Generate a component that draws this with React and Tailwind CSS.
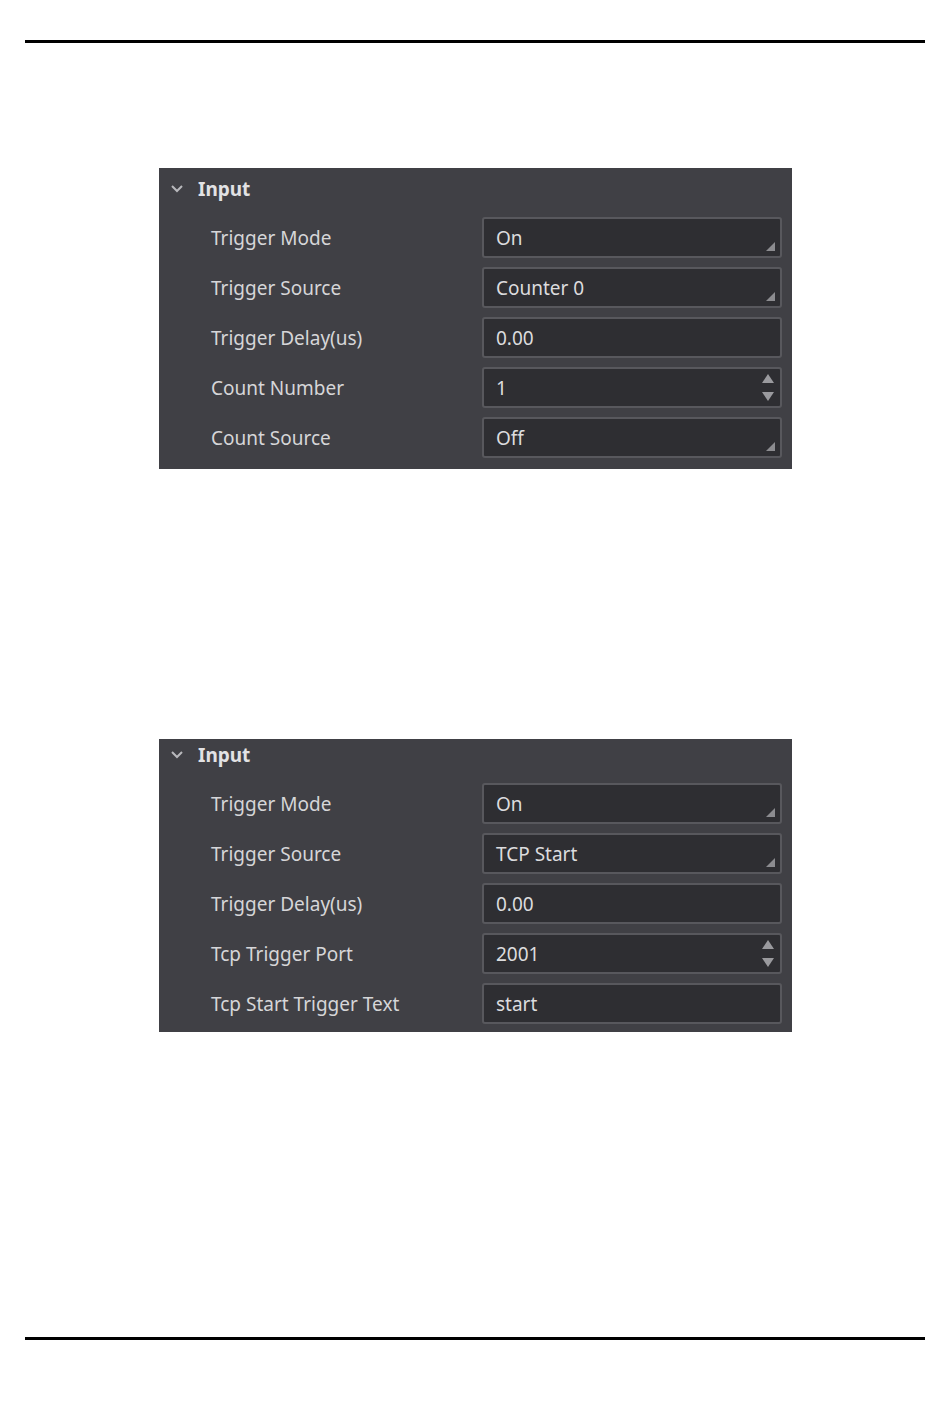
import React from "react";

const FONT = { fontFamily: '"Noto Sans", "Open Sans", sans-serif' };

function Corner() {
  return (
    <svg className="absolute right-[5px] bottom-[5px]" width="9" height="9" viewBox="0 0 9 9">
      <polygon points="9,0 9,9 0,9" fill="#8c8c90" />
    </svg>
  );
}

function Spinner() {
  return (
    <div className="absolute right-[6px] top-0 bottom-0 flex flex-col justify-between py-[5px]">
      <svg width="12" height="9" viewBox="0 0 12 9">
        <polygon points="6,0 12,9 0,9" fill="#9a9a9e" />
      </svg>
      <svg width="12" height="9" viewBox="0 0 12 9">
        <polygon points="0,0 12,0 6,9" fill="#9a9a9e" />
      </svg>
    </div>
  );
}

function Row({ label, value, kind }) {
  return (
    <div className="flex items-center h-[41px]">
      <div className="w-[323px] pl-[52px] text-[19px] text-[#d6d6d8] pt-[1px]">{label}</div>
      <div className="relative w-[300px] h-[41px] rounded-[3px] border-2 border-[#58585d] bg-[#2e2e32] flex items-center pl-[12px] pt-[1px] text-[19px] text-[#dcdcde]">
        {value}
        {kind === "select" && <Corner />}
        {kind === "spin" && <Spinner />}
      </div>
    </div>
  );
}

function Panel({ rows, pt, pb }) {
  return (
    <div className={`w-[633px] bg-[#404045] ${pt} ${pb}`} style={FONT}>
      <div className="h-[32px] flex items-center">
        <svg className="ml-[11px]" width="14" height="10" viewBox="0 0 14 10">
          <polyline points="2,2 7,7 12,2" fill="none" stroke="#b8b8bc" strokeWidth="2" />
        </svg>
        <span className="ml-[14px] text-[19px] font-bold text-[#e2e2e4]">Input</span>
      </div>
      <div className="pt-[12px] flex flex-col gap-[9px]">
        {rows.map((r) => (
          <Row key={r[0]} label={r[0]} value={r[1]} kind={r[2]} />
        ))}
      </div>
    </div>
  );
}

export default function App() {
  const rows1 = [
    ["Trigger Mode", "On", "select"],
    ["Trigger Source", "Counter 0", "select"],
    ["Trigger Delay(us)", "0.00", "text"],
    ["Count Number", "1", "spin"],
    ["Count Source", "Off", "select"],
  ];
  const rows2 = [
    ["Trigger Mode", "On", "select"],
    ["Trigger Source", "TCP Start", "select"],
    ["Trigger Delay(us)", "0.00", "text"],
    ["Tcp Trigger Port", "2001", "spin"],
    ["Tcp Start Trigger Text", "start", "text"],
  ];
  return (
    <div className="w-[950px] h-[1408px] bg-white flex flex-col">
      <div className="mt-[40px] mx-[25px] h-[3px] bg-black" />
      <div className="mt-[125px] ml-[159px]">
        <Panel rows={rows1} pt="pt-[5px]" pb="pb-[11px]" />
      </div>
      <div className="mt-[270px] ml-[159px]">
        <Panel rows={rows2} pt="pt-0" pb="pb-[8px]" />
      </div>
      <div className="mt-[305px] mx-[25px] h-[3px] bg-black" />
    </div>
  );
}
